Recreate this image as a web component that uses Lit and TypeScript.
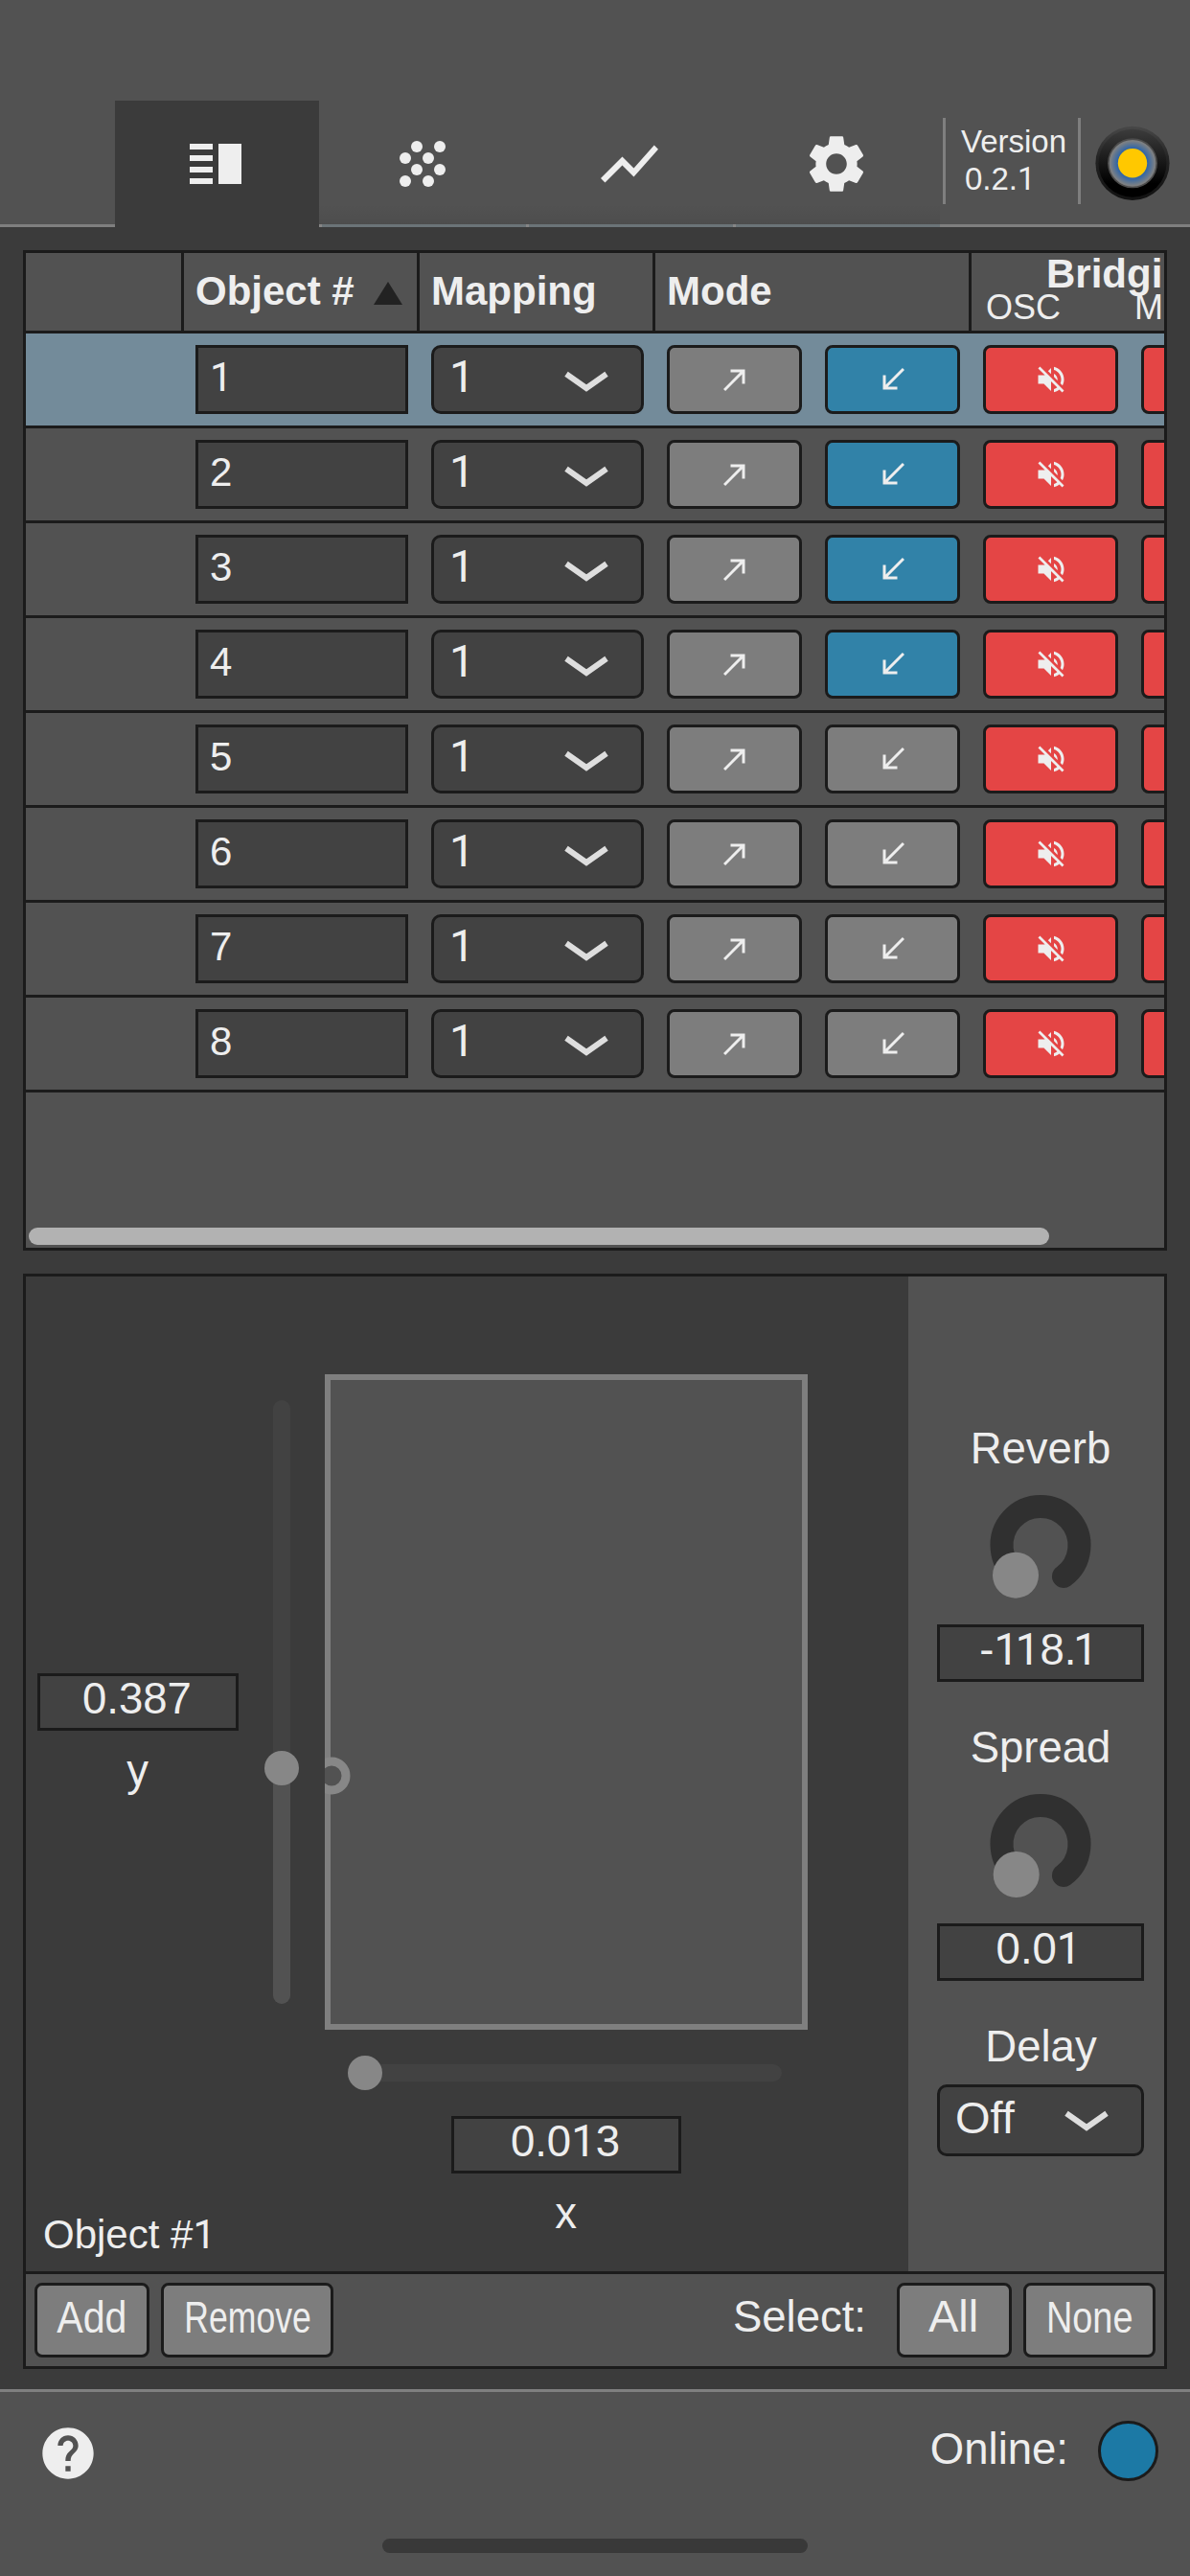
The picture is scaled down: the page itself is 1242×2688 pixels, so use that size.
import { LitElement, html, svg, css } from "lit";
import { customElement, property, state } from "lit/decorators.js";
import { classMap } from "lit/directives/class-map.js";

const ICONS: Record<string, unknown> = {
  split: svg`<path d="M3 5h8v2H3zM3 9h8v2H3zM3 13h8v2H3zM3 17h8v2H3zM13 5h8v14h-8z"/>`,
  dots: svg`<circle cx="10" cy="6" r="2"/><circle cx="18" cy="6" r="2"/><circle cx="6" cy="10" r="2"/><circle cx="14" cy="10" r="2"/><circle cx="10" cy="14" r="2"/><circle cx="18" cy="14" r="2"/><circle cx="6" cy="18" r="2"/><circle cx="14" cy="18" r="2"/>`,
  chart: svg`<path d="M3.5 18.49l6-6.01 4 4L22 6.92l-1.41-1.41-7.09 7.97-4-4L2 16.99z"/>`,
  gear: svg`<path d="M19.14 12.94c.04-.3.06-.61.06-.94 0-.32-.02-.64-.07-.94l2.03-1.58c.18-.14.23-.41.12-.61l-1.92-3.32c-.12-.22-.37-.29-.59-.22l-2.39.96c-.5-.38-1.03-.7-1.62-.94l-.36-2.54c-.04-.24-.24-.41-.48-.41h-3.84c-.24 0-.43.17-.47.41l-.36 2.54c-.59.24-1.13.57-1.62.94l-2.39-.96c-.22-.08-.47 0-.59.22L2.74 8.87c-.12.21-.08.47.12.61l2.03 1.58c-.05.3-.09.63-.09.94s.02.64.07.94l-2.03 1.58c-.18.14-.23.41-.12.61l1.92 3.32c.12.22.37.29.59.22l2.39-.96c.5.38 1.03.7 1.62.94l.36 2.54c.05.24.24.41.48.41h3.84c.24 0 .44-.17.47-.41l.36-2.54c.59-.24 1.13-.56 1.62-.94l2.39.96c.22.08.47 0 .59-.22l1.92-3.32c.12-.22.07-.47-.12-.61l-2.01-1.58zM12 15.6c-1.98 0-3.6-1.62-3.6-3.6s1.62-3.6 3.6-3.6 3.6 1.62 3.6 3.6-1.62 3.6-3.6 3.6z"/>`,
  send: svg`<path d="M9 5v2h6.59L4 18.59 5.41 20 17 8.41V15h2V5H9z"/>`,
  receive: svg`<path d="M20 5.41L18.59 4 7 15.59V9H5v10h10v-2H8.41z"/>`,
  mute: svg`<path d="M16.5 12c0-1.77-1.02-3.29-2.5-4.03v2.21l2.45 2.45c.03-.2.05-.41.05-.63zm2.5 0c0 .94-.2 1.82-.54 2.64l1.51 1.51C20.63 14.91 21 13.5 21 12c0-4.28-2.99-7.86-7-8.77v2.06c2.89.86 5 3.54 5 6.71zM4.27 3L3 4.27 7.73 9H3v6h4l5 5v-6.73l4.25 4.25c-.67.52-1.42.93-2.25 1.18v2.06c1.38-.31 2.63-.95 3.69-1.81L19.73 21 21 19.73l-9-9L4.27 3zM12 4L9.91 6.09 12 8.18V4z"/>`,
  help: svg`<path d="M12 2C6.48 2 2 6.48 2 12s4.48 10 10 10 10-4.48 10-10S17.52 2 12 2zm1 17h-2v-2h2v2zm2.07-7.75l-.9.92C13.45 12.9 13 13.5 13 15h-2v-.5c0-1.1.45-2.1 1.17-2.83l1.24-1.26c.37-.36.59-.86.59-1.41 0-1.1-.9-2-2-2s-2 .9-2 2H8c0-2.21 1.79-4 4-4s4 1.79 4 4c0 .88-.36 1.68-.93 2.25z"/>`,
};

const icon = (name: string) =>
  html`<svg class="icon" viewBox="0 0 24 24">${ICONS[name]}</svg>`;

/* The digit one is set in a face whose glyph has no foot. */
const num = (text: string) =>
  text.split(/(1)/).filter((p) => p).map((p) => (p === "1" ? html`<span class="one">1</span>` : p));

const base = css`
  :host {
    display: block;
    color: #eee;
    font-family: "Liberation Sans", Arial, Helvetica, sans-serif;
  }
  * {
    box-sizing: border-box;
  }
  svg {
    display: block;
    flex: none;
  }
  .icon {
    fill: #eee;
  }
  .one {
    font-family: Roboto, "Liberation Sans", sans-serif;
  }
  .field {
    background: #424242;
    border: 3px solid #1b1b1b;
  }
`;

@customElement("combo-box")
class ComboBox extends LitElement {
  @property() value = "";
  static styles = [
    base,
    css`
      .box {
        display: flex;
        justify-content: space-between;
        align-items: flex-start;
        height: 100%;
        border-radius: 10px;
        padding: 0 34px 0 16px;
        font-size: 47px;
        line-height: var(--combo-line, 59px);
      }
      .chevron {
        margin-top: 22px;
        fill: none;
        stroke: #dedede;
        stroke-width: 6;
      }
    `,
  ];
  render() {
    return html`<div class="box field">
      <span>${num(this.value)}</span>
      <svg class="chevron" width="46" height="26"><path d="M2 5.3L23 20L44 5.3" /></svg>
    </div>`;
  }
}

@customElement("param-knob")
class ParamKnob extends LitElement {
  @property() label = "";
  @property() value = "";
  @property({ type: Number }) tx = 82;
  @property({ type: Number }) ty = 101.7;
  static styles = [
    base,
    css`
      :host {
        font-size: 45.5px;
        text-align: center;
      }
      .label {
        line-height: 60px;
      }
      .value {
        height: 60px;
        line-height: 48px;
        padding-right: 4px;
      }
      .one + .one {
        margin-left: -0.07em;
      }
      .arc {
        fill: none;
        stroke: #303030;
        stroke-width: 24;
        stroke-linecap: round;
      }
      .thumb {
        fill: #878787;
      }
    `,
  ];
  render() {
    return html`<div class="label">${this.label}</div>
      <svg width="216" height="153">
        <path class="arc" d="M84 103A40.5 40.5 0 1 1 132 103" />
        <circle class="thumb" cx=${this.tx} cy=${this.ty} r="24" />
      </svg>
      <div class="value field">${num(this.value)}</div>`;
  }
}

@customElement("object-table")
class ObjectTable extends LitElement {
  @state() rows = [1, 2, 3, 4, 5, 6, 7, 8].map((id) => ({ id, receive: id <= 4 }));
  static styles = [
    base,
    css`
      .table {
        height: 1044px;
        border: 3px solid #1b1b1b;
        background: #525252;
        overflow: hidden;
        display: flex;
        flex-direction: column;
      }
      .head {
        display: grid;
        grid-template-columns: 165px 246px 246px 330px 340px;
        height: 84px;
        flex: none;
        border-bottom: 3px solid #1b1b1b;
        font-size: 42px;
        font-weight: bold;
        line-height: 80px;
      }
      .cell {
        border-right: 3px solid #1b1b1b;
        padding-left: 12px;
        display: flex;
      }
      .sort {
        margin: 30px 0 0 20px;
        fill: #222;
      }
      .bridge {
        padding-left: 13px;
      }
      .title {
        padding-left: 65px;
        line-height: 43px;
      }
      .subs {
        display: grid;
        grid-template-columns: 155px 100px;
        font-size: 36px;
        font-weight: normal;
        line-height: 28px;
        padding-left: 2px;
      }
      .row {
        display: flex;
        flex: none;
        height: 99px;
        padding: 12px 0 0 177px;
        border-bottom: 3px solid #1b1b1b;
      }
      .selected {
        background: #738b9a;
      }
      .id {
        width: 222px;
        height: 72px;
        margin-right: 24px;
        padding-left: 12px;
        font-size: 42px;
        line-height: 62px;
        flex: none;
      }
      combo-box {
        width: 222px;
        height: 72px;
        margin-right: 24px;
        flex: none;
      }
      .btn {
        display: grid;
        place-items: center;
        flex: none;
        width: 141px;
        height: 72px;
        margin-right: 24px;
        border: 3px solid #1b1b1b;
        border-radius: 8px;
        background: #7d7d7d;
      }
      .btn .icon {
        width: 36px;
        height: 36px;
      }
      .on {
        background: #3182a8;
      }
      .muted {
        background: #e44545;
      }
      .scroll {
        width: 1065px;
        height: 18px;
        margin: auto 0 3px 3px;
        border-radius: 9px;
        background: #b2b2b2;
        flex: none;
      }
    `,
  ];
  render() {
    return html`<div class="table">
      <div class="head">
        <div class="cell"></div>
        <div class="cell">
          Object #<svg class="sort" width="30" height="24"><path d="M15 0L30 24H0z" /></svg>
        </div>
        <div class="cell">Mapping</div>
        <div class="cell">Mode</div>
        <div class="bridge">
          <div class="title">Bridging</div>
          <div class="subs"><span>OSC</span><span>M</span></div>
        </div>
      </div>
      ${this.rows.map(
        (r, i) => html`<div class=${classMap({ row: true, selected: i === 0 })}>
          <div class="id field">${num(String(r.id))}</div>
          <combo-box value="1"></combo-box>
          <div class="btn">${icon("send")}</div>
          <div class=${classMap({ btn: true, on: r.receive })}>${icon("receive")}</div>
          <div class="btn muted">${icon("mute")}</div>
          <div class="btn muted"></div>
        </div>`
      )}
      <div class="scroll"></div>
    </div>`;
  }
}

@customElement("object-editor")
class ObjectEditor extends LitElement {
  static styles = [
    base,
    css`
      .panel {
        height: 1143px;
        border: 3px solid #1b1b1b;
        font-size: 45.5px;
      }
      .main {
        display: flex;
        height: 1038px;
      }
      .stage {
        width: 921px;
        display: grid;
        grid-template-columns: 210px 36px 504px;
        grid-template-rows: 684px 252px;
        column-gap: 27px;
        padding: 102px 0 0 12px;
      }
      .ycol {
        padding-top: 312px;
        text-align: center;
      }
      .value {
        height: 60px;
        line-height: 48px;
        text-align: center;
        padding-right: 2px;
      }
      .axis {
        line-height: 84px;
        text-align: center;
        padding-right: 1px;
      }
      .xcol .value {
        width: 240px;
        margin: 0 auto;
      }
      .name {
        grid-column: 1 / 3;
        align-self: end;
        padding: 0 0 8px 6px;
        font-size: 42px;
        line-height: 60px;
      }
      .track {
        fill: #424242;
      }
      .fill {
        fill: #525252;
      }
      .thumb {
        fill: #878787;
      }
      .frame {
        fill: #525252;
        stroke: #7f7f7f;
        stroke-width: 6;
      }
      .ring {
        fill: #525252;
        stroke: #878787;
        stroke-width: 9;
      }
      .params {
        flex: 1;
        background: #525252;
        padding: 150px 21px 0 30px;
        display: flex;
        flex-direction: column;
      }
      param-knob {
        margin-bottom: 39px;
      }
      .delay {
        text-align: center;
        line-height: 60px;
        margin: 0 0 9px;
        padding-left: 1px;
      }
      combo-box {
        height: 75px;
        --combo-line: 63px;
      }
      .actions {
        display: flex;
        height: 99px;
        border-top: 3px solid #1b1b1b;
        background: #525252;
        padding: 9px 9px 0;
      }
      .action {
        display: flex;
        justify-content: center;
        width: 120px;
        height: 78px;
        margin-right: 12px;
        border: 3px solid #1b1b1b;
        border-radius: 8px;
        background: #7d7d7d;
        font-size: 47px;
        line-height: 66px;
      }
      .action.last {
        margin-right: 0;
        width: 138px;
      }
      .action.wide {
        width: 180px;
      }
      .action.up {
        line-height: 64px;
        padding-right: 2px;
      }
      .sx {
        transform: scaleX(0.875);
      }
      .wide .sx {
        transform: scaleX(0.757);
      }
      .last .sx {
        transform: scaleX(0.806);
      }
      .select {
        margin: 0 32px 0 auto;
        line-height: 72px;
      }
    `,
  ];
  render() {
    return html`<div class="panel">
      <div class="main">
        <div class="stage">
          <div class="ycol">
            <div class="value field">0.387</div>
            <div class="axis">y</div>
          </div>
          <svg width="36" height="684">
            <rect class="track" x="9" y="27" width="18" height="630" rx="9" />
            <rect class="fill" x="9" y="402" width="18" height="255" rx="9" />
            <circle class="thumb" cx="18" cy="411" r="18" />
          </svg>
          <svg width="504" height="684">
            <rect class="frame" x="3" y="3" width="498" height="678" />
            <circle class="ring" cx="7" cy="419" r="15" />
          </svg>
          <div class="name">${num("Object #1")}</div>
          <div class="xcol">
            <svg width="504" height="90">
              <rect class="track" x="27" y="36" width="450" height="18" rx="9" />
              <circle class="thumb" cx="42" cy="45" r="18" />
            </svg>
            <div class="value field">${num("0.013")}</div>
            <div class="axis">x</div>
          </div>
        </div>
        <div class="params">
          <param-knob label="Reverb" value="-118.1"></param-knob>
          <param-knob label="Spread" value="0.01" tx="82.7" ty="102"></param-knob>
          <div class="delay">Delay</div>
          <combo-box value="Off"></combo-box>
        </div>
      </div>
      <div class="actions">
        <div class="action"><span class="sx">Add</span></div>
        <div class="action wide"><span class="sx">Remove</span></div>
        <div class="select">Select:</div>
        <div class="action up"><span>All</span></div>
        <div class="action last"><span class="sx">None</span></div>
      </div>
    </div>`;
  }
}

@customElement("app-root")
class AppRoot extends LitElement {
  static styles = [
    base,
    css`
      .app {
        width: 1242px;
        height: 2688px;
        background: #3b3b3b;
        display: flex;
        flex-direction: column;
        overflow: hidden;
      }
      .header {
        display: flex;
        height: 237px;
        flex: none;
        padding-top: 105px;
        background: #525252;
      }
      .lead {
        width: 120px;
        border-bottom: 3px solid #7f7f7f;
      }
      .tab {
        width: 216px;
        height: 132px;
        display: flex;
        justify-content: center;
        padding-top: 30px;
        background:
          linear-gradient(90deg, #868686 3px, #6b7478 3px) bottom / 100% 3px no-repeat,
          linear-gradient(rgba(0, 0, 0, 0), rgba(0, 0, 0, 0.07)) bottom / 100% 24px no-repeat;
      }
      .tab.active {
        width: 213px;
        padding-right: 3px;
        background: #3b3b3b;
      }
      .tab .icon {
        width: 72px;
        height: 72px;
      }
      .info {
        flex: 1;
        border-bottom: 3px solid #7f7f7f;
        padding: 18px 0 0 3px;
        display: flex;
      }
      .version {
        width: 144px;
        height: 90px;
        border: solid #7f7f7f;
        border-width: 0 3px;
        padding-left: 16px;
        font-size: 33px;
        line-height: 50px;
      }
      .release {
        padding-left: 4px;
        line-height: 28px;
      }
      .logo {
        margin: 7px 0 0 14px;
      }
      .body {
        flex: 1;
        display: flex;
        flex-direction: column;
        gap: 24px;
        padding: 24px 24px 0;
      }
      .footer {
        height: 195px;
        flex: none;
        border-top: 3px solid #7f7f7f;
        background: #525252;
        padding-top: 30px;
        font-size: 45.5px;
      }
      .status {
        display: flex;
        padding: 0 33px 0 39px;
      }
      .status .icon {
        width: 64px;
        height: 64px;
        margin-top: 2px;
      }
      .online {
        margin: 0 31px 0 auto;
        line-height: 60px;
      }
      .led {
        width: 63px;
        height: 63px;
        border: 3px solid #1b1b1b;
        border-radius: 50%;
        background: #1c79a5;
      }
      .home {
        width: 444px;
        height: 15px;
        margin: 57px auto 0;
        border-radius: 8px;
        background: #393939;
      }
    `,
  ];
  render() {
    return html`<div class="app">
      <div class="header">
        <div class="lead"></div>
        <div class="tab active">${icon("split")}</div>
        <div class="tab">${icon("dots")}</div>
        <div class="tab">${icon("chart")}</div>
        <div class="tab">${icon("gear")}</div>
        <div class="info">
          <div class="version">
            <div>Version</div>
            <div class="release">${num("0.2.1")}</div>
          </div>
          <svg class="logo" width="80" height="80" viewBox="0 0 80 80">
            <defs>
              <linearGradient id="rim" x1="0" y1="0" x2="0" y2="1">
                <stop offset="0" stop-color="#484848" />
                <stop offset=".45" stop-color="#222" />
                <stop offset="1" stop-color="#111" />
              </linearGradient>
              <linearGradient id="body" x1="0" y1="0" x2="0" y2="1">
                <stop offset="0" stop-color="#3c3c3c" />
                <stop offset=".8" stop-color="#000" />
              </linearGradient>
              <radialGradient id="glow">
                <stop offset=".55" stop-color="#1f5fae" />
                <stop offset=".92" stop-color="#7c8084" />
                <stop offset="1" stop-color="#777" />
              </radialGradient>
            </defs>
            <circle cx="40" cy="40.3" r="38.6" fill="url(#rim)" />
            <circle cx="40" cy="40.3" r="35.5" fill="url(#body)" />
            <circle cx="40" cy="40.3" r="25.2" fill="url(#glow)" stroke="#4c4c4c" stroke-width="1.6" />
            <circle cx="40" cy="40.3" r="15.2" fill="#ffc800" />
          </svg>
        </div>
      </div>
      <div class="body">
        <object-table></object-table>
        <object-editor></object-editor>
      </div>
      <div class="footer">
        <div class="status">
          ${icon("help")}
          <div class="online">Online:</div>
          <div class="led"></div>
        </div>
        <div class="home"></div>
      </div>
    </div>`;
  }
}
